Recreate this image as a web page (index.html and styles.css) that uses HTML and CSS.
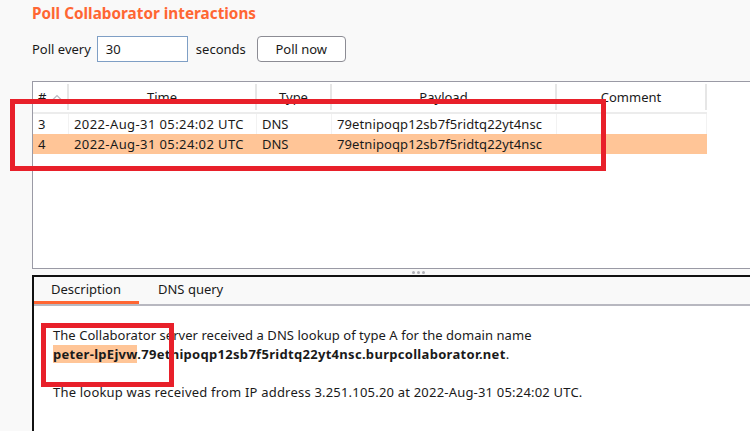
FILE: index.html
```html
<!DOCTYPE html>
<html>
<head>
<meta charset="utf-8">
<link rel="stylesheet" href="styles.css">
</head>
<body>
<div class="page">
  <h1 class="title">Poll Collaborator interactions</h1>
  <div class="poll">
    <span class="lbl">Poll every</span>
    <div class="input">30</div>
    <span class="lbl">seconds</span>
    <button class="btn">Poll now</button>
  </div>
  <div class="table-panel">
    <div class="row head">
      <div class="c c1">#<svg class="sort" width="10" height="6" viewBox="0 0 10 6"><path d="M1 5.5 L5 1.5 L9 5.5" fill="none" stroke="#b8b8c0" stroke-width="1.2"/></svg></div>
      <div class="c c2 ctr">Time</div>
      <div class="c c3 ctr">Type</div>
      <div class="c c4 ctr">Payload</div>
      <div class="c c5 ctr">Comment</div>
    </div>
    <div class="row body">
      <div class="c c1">3</div>
      <div class="c c2">2022-Aug-31 05:24:02 UTC</div>
      <div class="c c3">DNS</div>
      <div class="c c4">79etnipoqp12sb7f5ridtq22yt4nsc</div>
      <div class="c c5"></div>
    </div>
    <div class="row body sel">
      <div class="c c1">4</div>
      <div class="c c2">2022-Aug-31 05:24:02 UTC</div>
      <div class="c c3">DNS</div>
      <div class="c c4">79etnipoqp12sb7f5ridtq22yt4nsc</div>
      <div class="c c5"></div>
    </div>
  </div>
  <div class="splitter"><span class="dot"></span><span class="dot"></span><span class="dot"></span></div>
  <div class="detail-panel">
    <div class="tabs">
      <div class="tab active">Description</div>
      <div class="tab">DNS query</div>
    </div>
    <div class="content">
      <p class="line">The Collaborator server received a DNS lookup of type A for the domain name</p>
      <p class="line"><b><span class="hl">peter-lpEjvw</span>.79etnipoqp12sb7f5ridtq22yt4nsc.burpcollaborator.net</b>.</p>
      <p class="line gap">The lookup was received from IP address 3.251.105.20 at 2022-Aug-31 05:24:02 UTC.</p>
    </div>
  </div>
</div>
<div class="mark mark1"></div>
<div class="mark mark2"></div>
</body>
</html>
```
FILE: styles.css
```css
html, body {
  margin: 0;
  padding: 0;
}
html {
  overflow: hidden;
}
body {
  background: #f9f9f9;
  font-family: "Noto Sans", "Open Sans", sans-serif;
  font-size: 13px;
  color: #1a1a1a;
  width: 750px;
  height: 431px;
  overflow: hidden;
  position: relative;
}
.page {
  padding-left: 32px;
}
.title {
  margin: 0;
  padding-top: 2px;
  height: 25px;
  font-size: 15.3px;
  font-weight: bold;
  color: #ff6633;
  line-height: 22px;
}
.poll {
  display: flex;
  align-items: center;
  height: 26px;
  margin-top: 9px;
}
.lbl {
  margin-right: 6px;
}
.input {
  width: 81px;
  height: 24px;
  border: 1px solid #7f9fc5;
  background: #fff;
  padding-left: 8px;
  line-height: 24px;
  margin-right: 8px;
}
.btn {
  margin-left: 5px;
  width: 89px;
  height: 26px;
  border: 1px solid #8c8c94;
  border-radius: 4px;
  background: #fff;
  font: inherit;
  color: #1a1a1a;
  padding: 0;
}
.table-panel {
  margin-top: 19px;
  height: 186px;
  background: #fff;
  border-top: 1px solid #9a9aa5;
  border-left: 1px solid #9a9aa5;
  border-bottom: 1px solid #9a9aa5;
}
.row {
  display: flex;
  width: 674px;
}
.row.head {
  height: 30px;
  border-bottom: 2px solid #ececec;
  align-items: stretch;
}
.c {
  box-sizing: border-box;
  padding-left: 5px;
  white-space: nowrap;
  display: flex;
  align-items: center;
}
.c1 { width: 36px; }
.c2 { width: 188px; }
.c3 { width: 75px; }
.c4 { width: 225px; }
.c5 { width: 150px; }
.head .c {
  border-right: 2px solid #e6e6e6;
  margin: 2px 0;
}
.head .ctr {
  justify-content: center;
  padding-left: 0;
}
.sort { margin-left: 6px; }
.row.body {
  height: 20px;
}
.body .c {
  border-right: 1px solid #f2f2f2;
}
.body .c2 { letter-spacing: 0.4px; }
.body .c4 { letter-spacing: 0.1px; }
.body.sel {
  background: #ffc597;
}
.body.sel .c { border-right-color: transparent; }
.splitter {
  height: 6px;
  display: flex;
  justify-content: center;
  gap: 2px;
  padding-left: 55px;
  align-items: center;
}
.dot {
  width: 3px;
  height: 3px;
  border-radius: 50%;
  background: #b0b0b6;
}
.detail-panel {
  border-top: 2px solid #111;
  border-left: 2px solid #111;
  height: 160px;
  background: #fff;
}
.tabs {
  display: flex;
  height: 27px;
  background: #f9f9f9;
  border-bottom: 2px solid #b8b8c0;
}
.tab {
  padding: 0 18px 0 17px;
  line-height: 24px;
  height: 24px;
}
.tab.active {
  border-bottom: 3px solid #ff6633;
  width: 70px;
}
.tab + .tab {
  padding-left: 19px;
}
.content {
  padding: 20px 0 0 19px;
}
.line {
  margin: 0;
  line-height: 19px;
  letter-spacing: 0.05px;
}
.line b {
  letter-spacing: 0.3px;
}
.line.gap {
  margin-top: 19px;
  letter-spacing: 0.2px;
}
.hl {
  background: #ffc597;
}
.mark {
  position: absolute;
  border: 5px solid #e8202a;
  box-sizing: border-box;
}
.mark1 {
  left: 10px;
  top: 99px;
  width: 596px;
  height: 72px;
}
.mark2 {
  left: 41px;
  top: 323px;
  width: 133px;
  height: 64px;
}
```
